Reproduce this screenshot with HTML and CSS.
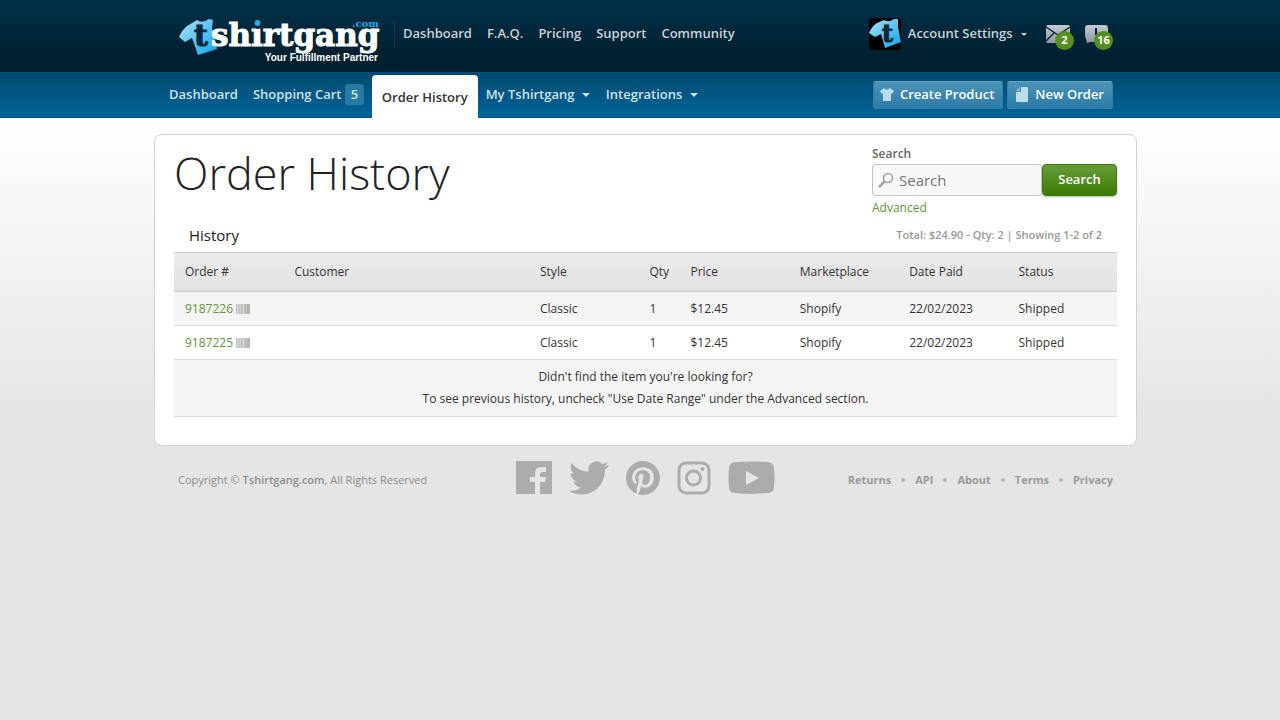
FILE: index.html
```html
<!DOCTYPE html>
<html lang="en">
<head>
<meta charset="utf-8">
<meta name="viewport" content="width=device-width, initial-scale=1">
<title>Order History</title>
<link rel="stylesheet" href="styles.css">
</head>
<body>
<header class="top">
  <div class="wrap top-row">
    <a class="logo" href="#" aria-label="tshirtgang.com">
      <svg width="204" height="48" viewBox="0 0 204 48">
        <defs>
          <linearGradient id="shirt" x1="0" y1="0" x2="1" y2="1"><stop offset="0.1" stop-color="#9bdcf8"/><stop offset="1" stop-color="#0fa5e8"/></linearGradient>
        </defs>
        <path fill="url(#shirt)" d="M1 19Q4 12 9 8L19 2Q24 6 31 1L35 2 34 10 39 31 20 37 14 20 7 24Z"/>
        <text class="logo-t" x="16" y="28">t</text>
        <text class="logo-name" x="33" y="28">shirtgang</text>
        <circle cx="79.500" cy="6" r="5" fill="#002536"/>
        <circle cx="79.500" cy="5" r="3" fill="#22aee8"/>
        <text class="logo-com" x="174" y="9">.com</text>
        <text class="logo-tag" x="200" y="43" text-anchor="end">Your Fulfillment Partner</text>
      </svg>
    </a>
    <nav class="links site-nav">
      <a href="#">Dashboard</a><a href="#">F.A.Q.</a><a href="#">Pricing</a><a href="#">Support</a><a href="#">Community</a>
    </nav>
    <div class="account">
      <svg class="avatar" width="32" height="32" viewBox="0 0 32 32">
        <rect width="32" height="32" rx="3" fill="#000"/>
        <path fill="url(#shirt)" d="M0 15Q3 8 8 5L15 2Q20 5 25 1L29 1 29 9 32 24 16 30 12 16 6 19Z"/>
        <text class="logo-t small" x="13" y="24">t</text>
      </svg>
      <a class="menu-link" href="#">Account Settings <span class="caret"></span></a>
      <a class="notice" href="#" aria-label="Messages">
        <svg width="24" height="18" viewBox="0 0 24 18"><defs><linearGradient id="metal" x1="0" y1="0" x2="0" y2="1"><stop offset="0" stop-color="#c2c9ce"/><stop offset="1" stop-color="#909aa2"/></linearGradient></defs><rect width="24" height="18" rx="2" fill="url(#metal)"/><path d="M0 2 12 10 24 2M0 16 8 8M24 16 16 8" fill="none" stroke="#001f2f" stroke-width="1.300"/></svg>
        <span class="badge">2</span>
      </a>
      <a class="notice" href="#" aria-label="Alerts">
        <svg width="24" height="18" viewBox="0 0 24 18"><path d="M3 0H20Q23 0 23 3V14Q23 17 20 17H5L2 18 1 14Q0 12 0 9V3Q0 0 3 0Z" fill="url(#metal)"/><path d="M11 3V10M11 12V14" stroke="#001f2f" stroke-width="2"/></svg>
        <span class="badge">16</span>
      </a>
    </div>
  </div>
</header>
<div class="subbar">
  <div class="wrap sub-row">
    <nav class="tabs">
      <a href="#">Dashboard</a>
      <a href="#">Shopping Cart <span class="count">5</span></a>
      <a class="current" href="#">Order History</a>
      <a href="#">My Tshirtgang <span class="caret"></span></a>
      <a href="#">Integrations <span class="caret"></span></a>
    </nav>
    <div class="actions">
      <button class="action" type="button"><svg width="14" height="13" viewBox="0 0 14 13"><path d="M4 0Q7 3 10 0L14 3 12 6 11 5V13H3V5L2 6 0 3Z" fill="#bcdcea"/></svg>Create Product</button>
      <button class="action" type="button"><svg class="page-icon" width="12" height="15" viewBox="0 0 12 15"><path d="M5 0H11Q12 0 12 1V14Q12 15 11 15H1Q0 15 0 14V5H4Q5 5 5 4Z" fill="#bcdcea"/><path d="M4 0V4H0Z" fill="#8fbdd2"/></svg>New Order</button>
    </div>
  </div>
</div>
<main class="page">
  <section class="wrap card">
    <div class="heading">
      <h1>Order History</h1>
      <form class="search">
        <label for="q">Search</label>
        <div class="search-row">
          <div class="field">
            <svg width="16" height="16" viewBox="0 0 16 16"><circle cx="10" cy="6" r="4.500" fill="none" stroke="#a5a5a5" stroke-width="1.600"/><path d="M6.500 9.500 1 15" stroke="#a5a5a5" stroke-width="2.500"/></svg>
            <input id="q" type="search" placeholder="Search">
          </div>
          <button type="submit">Search</button>
        </div>
        <a href="#">Advanced</a>
      </form>
    </div>
    <div class="table-title">
      <h2>History</h2>
      <p>Total: $24.90 - Qty: 2 | Showing 1-2 of 2</p>
    </div>
    <table>
      <colgroup><col class="c-mid"><col class="c-wide"><col class="c-mid"><col class="c-small"><col class="c-mid"><col class="c-mid"><col class="c-mid"><col></colgroup>
      <thead><tr><th>Order #</th><th>Customer</th><th>Style</th><th>Qty</th><th>Price</th><th>Marketplace</th><th>Date Paid</th><th>Status</th></tr></thead>
      <tbody>
        <tr class="odd"><td><a href="#">9187226</a><span class="barcode"></span></td><td></td><td>Classic</td><td>1</td><td>$12.45</td><td>Shopify</td><td>22/02/2023</td><td>Shipped</td></tr>
        <tr><td><a href="#">9187225</a><span class="barcode"></span></td><td></td><td>Classic</td><td>1</td><td>$12.45</td><td>Shopify</td><td>22/02/2023</td><td>Shipped</td></tr>
        <tr class="odd"><td class="hint" colspan="8">Didn't find the item you're looking for?<br>To see previous history, uncheck "Use Date Range" under the Advanced section.</td></tr>
      </tbody>
    </table>
  </section>
  <footer class="wrap footer">
    <p>Copyright © <b>Tshirtgang.com</b>, All Rights Reserved</p>
    <div class="social">
      <a href="#" aria-label="Facebook"><svg width="36" height="34" viewBox="0 0 36 34"><path fill="#acacac" d="M0 0H36V33H24V21H29L30 16H24V13Q24 11 27 11H30V6H25Q19 6 19 12V16H14V21H19V33H0Z"/></svg></a>
      <a href="#" aria-label="Twitter"><svg width="40" height="34" viewBox="0 2 24 20" preserveAspectRatio="none"><path fill="#acacac" d="M23.950 4.570a10 10 0 0 1-2.820.770 4.960 4.960 0 0 0 2.160-2.720c-.95.560-2 .960-3.130 1.190a4.920 4.920 0 0 0-8.380 4.480C7.690 8.100 4.070 6.130 1.640 3.160a4.920 4.920 0 0 0 1.520 6.570 4.900 4.900 0 0 1-2.230-.610v.060a4.920 4.920 0 0 0 3.950 4.830 5 5 0 0 1-2.210.080 4.940 4.940 0 0 0 4.600 3.420A9.870 9.870 0 0 1 0 19.540a14 14 0 0 0 7.550 2.210c9.050 0 14-7.500 14-13.980 0-.21 0-.42-.02-.63a9.940 9.940 0 0 0 2.460-2.550z"/></svg></a>
      <a href="#" aria-label="Pinterest"><svg width="34" height="34" viewBox="0 0 24 24"><path fill="#acacac" d="M12 0C5.370 0 0 5.370 0 12c0 5.080 3.160 9.420 7.620 11.160-.1-.95-.2-2.400.04-3.440l1.400-5.960s-.35-.72-.35-1.780c0-1.660.97-2.910 2.170-2.910 1.020 0 1.520.770 1.520 1.690 0 1.030-.66 2.570-1 3.990-.28 1.200.6 2.170 1.780 2.170 2.130 0 3.770-2.250 3.770-5.490 0-2.860-2.060-4.870-5.010-4.870-3.410 0-5.410 2.560-5.410 5.200 0 1.030.39 2.140.89 2.740.1.120.11.220.08.350l-.33 1.360c-.05.220-.17.270-.4.160-1.500-.69-2.430-2.880-2.430-4.650 0-3.780 2.750-7.250 7.920-7.250 4.160 0 7.400 2.970 7.400 6.930 0 4.140-2.610 7.460-6.230 7.460-1.220 0-2.360-.63-2.750-1.380l-.75 2.850c-.27 1.040-1 2.350-1.490 3.150A12 12 0 1 0 12 0z"/></svg></a>
      <a href="#" aria-label="Instagram"><svg width="34" height="34" viewBox="0 0 34 34" fill="none" stroke="#acacac"><rect x="2" y="2" width="30" height="30" rx="7" stroke-width="3"/><circle cx="16.500" cy="17" r="7" stroke-width="3"/><circle cx="25.500" cy="8" r="2" fill="#acacac" stroke="none"/></svg></a>
      <a href="#" aria-label="YouTube"><svg width="47" height="34" viewBox="0 0 47 34"><path fill="#acacac" fill-rule="evenodd" d="M8 1Q23 0 39 1 46 1 46 8 47 17 46 26 46 32 39 32 23 34 8 32 1 32 1 26 0 17 1 8 1 1 8 1ZM18 10V24L31 17Z"/></svg></a>
    </div>
    <nav class="foot-nav"><a href="#">Returns</a><a href="#">API</a><a href="#">About</a><a href="#">Terms</a><a href="#">Privacy</a></nav>
  </footer>
</main>
</body>
</html>
```
FILE: styles.css
```css
* { box-sizing: border-box; }
body { margin: 0; min-height: 100vh; background: #e5e5e5; color: #333; font: 13px/22px "Open Sans", sans-serif; }
a { color: inherit; text-decoration: none; }
h1, h2, p { margin: 0; }
svg { display: block; }
.wrap { max-width: 983px; margin: 0 auto; }
.top, .subbar, .page { padding-left: 11px; }
.top { background: linear-gradient(#003149, #001f2f 80%); color: #c9d2d8; font-weight: 600; }
.top-row { display: flex; align-items: flex-start; height: 72px; padding: 18px 24px 0; }
.logo { flex: none; }
.logo-t { font: bold 30px "DejaVu Serif", serif; fill: #00283c; stroke: #00283c; stroke-width: 1px; }
.small { font-size: 24px; }
.logo-name { font: bold 31px "DejaVu Serif", serif; fill: #fff; stroke: #fff; stroke-width: 1px; }
.logo-com { font: bold 10px "DejaVu Serif", serif; fill: #22aee8; }
.logo-tag { font: bold 10px "Liberation Sans", sans-serif; fill: #fff; }
.links { display: flex; gap: 15px; margin: 2px 0 0 12px; padding: 2px 0 4px 8px; border-left: 1px solid #16384a; }
.account { display: flex; align-items: flex-start; margin-left: auto; }
.menu-link { margin: 4px 19px 0 7px; }
.caret { display: inline-block; margin-left: 4px; border: 4px solid transparent; border-top-color: currentColor; border-bottom: 0; vertical-align: 2px; }
.account .caret { margin-left: 5px; border-width: 3px; border-bottom: 0; }
.notice { position: relative; margin: 7px 3px 0 0; padding-right: 12px; }
.notice:last-child { margin-right: 0; padding-right: 4px; }
.badge { position: absolute; left: 9px; top: 6px; min-width: 19px; height: 19px; border-radius: 10px; background: #55901f; color: #fff; font-size: 11px; font-weight: 700; line-height: 18px; text-align: center; }
.subbar { background: linear-gradient(#004a70, #006497); border-top: 1px solid #00507c; border-bottom: 1px solid #00578a; color: #d0e2ec; font-weight: 600; }
.sub-row { display: flex; justify-content: space-between; align-items: flex-start; height: 45px; padding: 0 24px 0 7px; margin-bottom: -1px; }
.tabs { display: flex; align-items: stretch; height: 45px; }
.tabs a { padding: 10px 7px 0 8px; }
.tabs .current { margin: 2px 0 0 1px; padding: 11px 10px 0; border-radius: 4px 4px 0 0; background: #fff; color: #333; }
.tabs .current ~ a { padding-right: 8px; }
.count { display: inline-block; min-width: 19px; height: 21px; border-radius: 3px; background: #287aa5; line-height: 20px; text-align: center; }
.actions { display: flex; gap: 4px; padding-top: 8px; }
.action { display: flex; align-items: center; gap: 6px; height: 28px; padding: 0 8px 2px; border: 1px solid #347fa7; border-top-color: #6ba4c1; border-radius: 3px; background: linear-gradient(#4b92b7, #2c7ba7); color: #fff; font: 600 13px/20px "Open Sans", sans-serif; }
.action svg { flex: none; margin-left: -2px; }
.action .page-icon { margin: 0 1px 0 0; }
.page { padding-top: 16px; background: linear-gradient(#fff, #e5e5e5 300px); }
.card { padding: 11px 19px 28px; border: 1px solid #d2d2d2; border-radius: 8px; background: #fff; }
.heading { display: flex; justify-content: space-between; }
h1 { color: #222; font-size: 45px; font-weight: 300; line-height: 54px; }
.search { width: 245px; line-height: 16px; }
.search label { display: block; height: 18px; color: #666; font-size: 12px; font-weight: 600; }
.search-row { display: flex; height: 32px; }
.field { display: flex; flex: 1; align-items: center; gap: 5px; min-width: 0; padding-left: 5px; border: 1px solid #c2c2c2; border-radius: 3px; background: #f8f8f8; }
.field svg { flex: none; }
.field input { width: 100%; min-width: 0; padding: 0; border: 0; outline: 0; background: none; color: #333; font: 15px/20px "Open Sans", sans-serif; }
.field input::placeholder { color: #757575; }
.search button { width: 75px; padding: 0 0 2px; border: 1px solid #3d7a0b; border-radius: 4px; background: linear-gradient(#689d3a, #3b7c05); box-shadow: 0 1px 2px #bbb; color: #fff; font: 600 13px/20px "Open Sans", sans-serif; }
.search a { display: block; margin-top: 4px; color: #61953a; font-size: 12px; }
.table-title { display: flex; justify-content: space-between; align-items: center; height: 36px; padding: 2px 15px 0; }
h2 { color: #222; font-size: 15px; font-weight: 500; }
.table-title p { color: #999; font-size: 11px; font-weight: 600; }
table { width: 100%; border-collapse: collapse; table-layout: fixed; font-size: 12px; }
.c-mid { width: 11.6%; }
.c-wide { width: 26.050%; }
.c-small { width: 4.350%; }
th { height: 39px; padding: 0 0 0 11px; border: solid #ccc; border-width: 1px 0; font-weight: 400; text-align: left; }
thead tr { background: linear-gradient(#ebebeb, #e2e2e2); }
td { height: 34px; padding: 0 0 0 11px; border-bottom: 1px solid #ddd; }
td a { color: #61953a; }
.odd { background: #f5f5f5; }
.barcode { display: inline-block; width: 14px; height: 10px; margin-left: 3px; vertical-align: -1px; background: linear-gradient(90deg, #bbb 1px, #ddd 1px 2px, #c9c9c9 2px 4px, #d8cfc4 4px 5px, #c4c4c4 5px 7px, #ddd 7px 8px, #bbb 8px 10px, #c9bdb4 10px 11px, #b5b5b5 11px); }
.hint { height: 57px; padding: 6px 0; text-align: center; }
.footer { display: grid; grid-template-columns: 1fr auto 1fr; align-items: center; padding: 15px 24px; color: #8c8c8c; font-size: 11px; }
.footer p { padding-top: 4px; }
.footer b { font-weight: 600; }
.social { display: flex; gap: 17px; }
.foot-nav { display: flex; justify-content: flex-end; padding-top: 4px; font-weight: 700; color: #999; }
.foot-nav a + a::before { content: ""; display: inline-block; width: 4px; height: 4px; margin: 0 10px; border-radius: 50%; background: #b5b5b5; vertical-align: 2px; }
```
